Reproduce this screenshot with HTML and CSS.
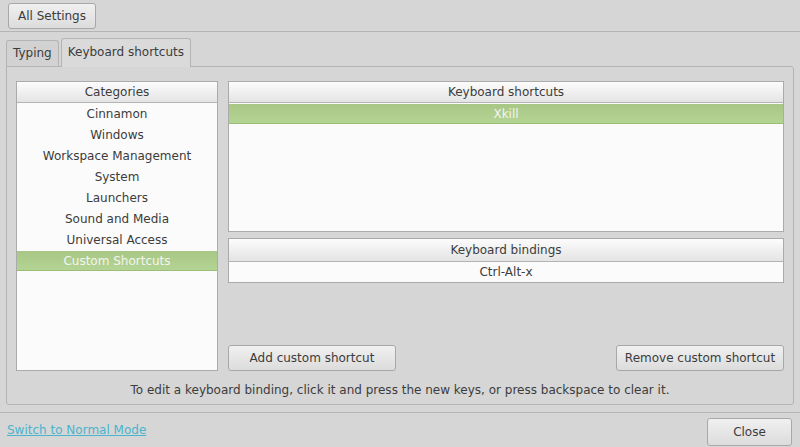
FILE: index.html
```html
<!DOCTYPE html>
<html lang="en">
<head>
    <meta charset="UTF-8">
    <title>Keyboard</title>
    <link rel="stylesheet" href="styles.css">
</head>
<body>

<header class="topbar">
    <button class="btn all-settings">All Settings</button>
</header>

<div class="notebook">
    <div class="tabs">
        <div class="tab">Typing</div>
        <div class="tab active">Keyboard shortcuts</div>
    </div>

    <div class="panel">
        <div class="columns">
            <div class="list categories">
                <div class="list-head">Categories</div>
                <div class="row">Cinnamon</div>
                <div class="row">Windows</div>
                <div class="row">Workspace Management</div>
                <div class="row">System</div>
                <div class="row">Launchers</div>
                <div class="row">Sound and Media</div>
                <div class="row">Universal Access</div>
                <div class="row selected">Custom Shortcuts</div>
            </div>

            <div class="right">
                <div class="list shortcuts">
                    <div class="list-head">Keyboard shortcuts</div>
                    <div class="row selected">Xkill</div>
                </div>
                <div class="list bindings">
                    <div class="list-head">Keyboard bindings</div>
                    <div class="row">Ctrl-Alt-x</div>
                </div>
                <div class="actions">
                    <button class="btn wide">Add custom shortcut</button>
                    <button class="btn wide">Remove custom shortcut</button>
                </div>
            </div>
        </div>
        <p class="hint">To edit a keyboard binding, click it and press the new keys, or press backspace to clear it.</p>
    </div>
</div>

<footer class="bottombar">
    <a href="#" class="mode-link">Switch to Normal Mode</a>
    <button class="btn close">Close</button>
</footer>

</body>
</html>
```

FILE: styles.css
```css
html, body {
    margin: 0;
    padding: 0;
}
body {
    width: 800px;
    height: 447px;
    background-color: #d6d6d6;
    font-family: "DejaVu Sans", sans-serif;
    font-size: 12px;
    color: #3c3c3c;
    overflow: hidden;
}
.btn {
    font-family: inherit;
    font-size: 12px;
    color: #3c3c3c;
    background: linear-gradient(#f0f0f0, #dcdcdc);
    border: 1px solid #a8a8a8;
    border-radius: 3px;
    padding: 0;
    height: 26px;
}
.topbar {
    height: 32px;
    box-sizing: border-box;
    padding: 3px 8px 0;
    border-bottom: 1px solid #b4b4b4;
}
.all-settings {
    width: 88px;
}
.notebook {
    padding: 6px 6px 0 6px;
}
.tabs {
    display: flex;
    align-items: flex-end;
    height: 28px;
}
.tab {
    height: 26px;
    box-sizing: border-box;
    padding: 5px 6px 0;
    border: 1px solid #b4b4b4;
    border-bottom: none;
    border-radius: 3px 3px 0 0;
    background-color: #d2d2d2;
    margin-right: 2px;
}
.tab.active {
    height: 29px;
    padding-top: 6px;
    background-color: #dadada;
    margin-bottom: -1px;
    position: relative;
}
.panel {
    height: 339px;
    box-sizing: border-box;
    border: 1px solid #b4b4b4;
    border-radius: 0 3px 3px 3px;
    background-color: #d6d6d6;
    padding: 14px 9px 0 9px;
}
.columns {
    display: flex;
    gap: 10px;
    height: 290px;
}
.list {
    background-color: #fbfbfb;
    border: 1px solid #ababab;
    box-sizing: border-box;
}
.categories {
    width: 202px;
}
.list-head {
    height: 21px;
    line-height: 20px;
    text-align: center;
    background: linear-gradient(#fcfcfc, #e4e4e4);
    border-bottom: 1px solid #b4b4b4;
    box-sizing: border-box;
}
.row {
    height: 21px;
    line-height: 23px;
    text-align: center;
}
.row.selected {
    height: 20px;
    line-height: 20px;
    margin-top: 1px;
    color: #f4f4f0;
    background: linear-gradient(#a8c785, #b4d495);
    border-bottom: 1px solid #9bbd76;
    box-sizing: border-box;
}
.right {
    flex: 1;
    display: flex;
    flex-direction: column;
}
.shortcuts {
    height: 151px;
}
.bindings {
    margin-top: 6px;
    height: 45px;
}
.bindings .list-head {
    height: 23px;
    line-height: 22px;
}
.bindings .row {
    height: 20px;
    line-height: 20px;
}
.actions {
    margin-top: auto;
    display: flex;
    justify-content: space-between;
}
.wide {
    width: 168px;
}
.hint {
    margin: 12px 0 0;
    text-align: center;
}
.bottombar {
    margin-top: 7px;
    border-top: 1px solid #b4b4b4;
    display: flex;
    justify-content: space-between;
    align-items: center;
    padding: 5px 8px 0 7px;
}
.mode-link {
    color: #4ab4cc;
    font-size: 12px;
    margin-top: -4px;
}
.close {
    width: 85px;
    height: 28px;
}
```
